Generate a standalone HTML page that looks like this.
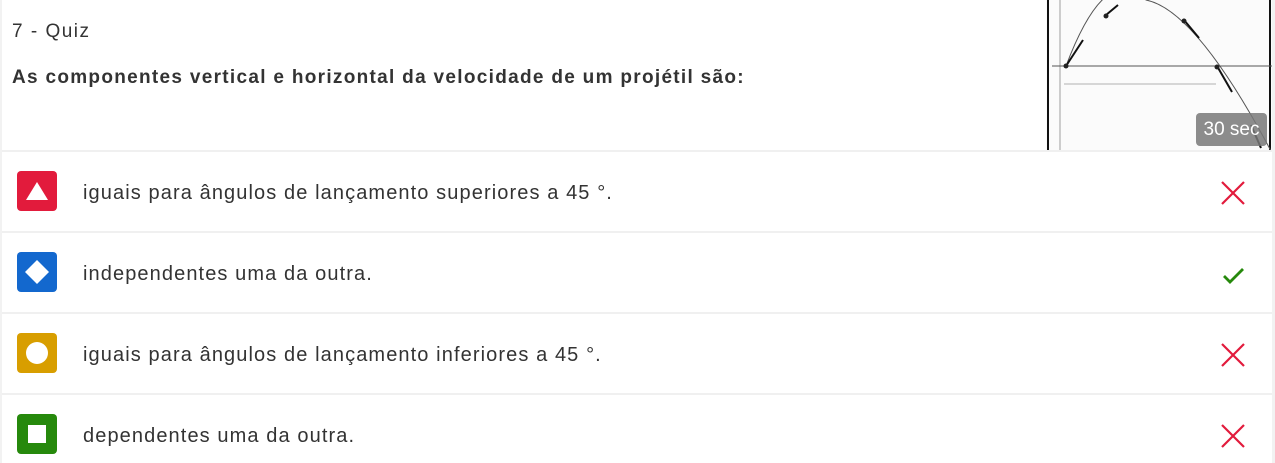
<!DOCTYPE html>
<html><head><meta charset="utf-8"><style>
*{margin:0;padding:0;box-sizing:border-box}
html,body{width:1275px;height:463px;overflow:hidden}
body{background:#f2f2f2;font-family:"Liberation Sans",sans-serif;color:#333;position:relative}
.card{position:absolute;left:2px;top:0;width:1270px;height:463px;background:#fff}
.title{position:absolute;left:12px;top:21px;font-size:19px;letter-spacing:1.5px;color:#333}
.q{position:absolute;left:12px;top:67px;font-size:19px;letter-spacing:1.3px;font-weight:bold;color:#333}
.img{position:absolute;left:1046px;top:0;width:226px;height:151px;background:#fbfbfb;overflow:hidden}
.badge{position:absolute;left:1196px;top:113px;width:71px;height:33px;background:rgba(120,120,120,.85);border-radius:4px;color:#fff;font-size:19px;line-height:33px;text-align:center}
.row{position:absolute;left:2px;width:1270px;height:81px;border-top:2px solid #f0f0f0}
.ic{position:absolute;left:15px;top:19px;width:40px;height:40px;border-radius:4px}
.t{position:absolute;left:81px;top:30px;font-size:20px;letter-spacing:1.1px;color:#333}
.m{position:absolute;left:1216px;top:26px}
</style></head><body>
<div class="card"></div>
<div class="title">7 - Quiz</div>
<div class="q">As componentes vertical e horizontal da velocidade de um projétil são:</div>
<div class="img"><svg width="226" height="151" viewBox="0 0 226 151">
<line x1="2" y1="0" x2="2" y2="151" stroke="#111" stroke-width="2"/>
<line x1="224" y1="0" x2="224" y2="151" stroke="#111" stroke-width="2"/>
<line x1="14" y1="0" x2="14" y2="151" stroke="#888" stroke-width="0.8"/>
<line x1="6" y1="66" x2="226" y2="66" stroke="#555" stroke-width="1"/>
<line x1="18" y1="84" x2="170" y2="84" stroke="#999" stroke-width="0.7"/>
<path d="M20 66 Q60 -40 100 0 Q150 10 225 151" fill="none" stroke="#555" stroke-width="1"/>
<line x1="20" y1="66" x2="37" y2="40" stroke="#111" stroke-width="2"/>
<line x1="60" y1="15" x2="72" y2="5" stroke="#111" stroke-width="2"/>
<line x1="138" y1="20" x2="153" y2="38" stroke="#111" stroke-width="2"/>
<line x1="171" y1="66" x2="186" y2="92" stroke="#111" stroke-width="2"/>
<line x1="205" y1="125" x2="215" y2="148" stroke="#111" stroke-width="2"/>
<circle cx="20" cy="66" r="2.5" fill="#222"/><circle cx="60" cy="16" r="2.5" fill="#222"/><circle cx="138" cy="21" r="2.5" fill="#222"/><circle cx="171" cy="67" r="2.5" fill="#222"/>
</svg></div>
<div class="badge">30 sec</div>

<div class="row" style="top:150px"><div class="ic" style="background:#e21b3c"><svg width="40" height="40"><polygon points="20,11 31,29 9,29" fill="#fff"/></svg></div><div class="t">iguais para ângulos de lançamento superiores a 45 °.</div><svg class="m" width="30" height="30"><path d="M4 4L26 26M26 4L4 26" stroke="#e21b3c" stroke-width="2.2"/></svg></div>
<div class="row" style="top:231px"><div class="ic" style="background:#1368ce"><svg width="40" height="40"><polygon points="20,8 32,20 20,32 8,20" fill="#fff"/></svg></div><div class="t">independentes uma da outra.</div><svg class="m" width="30" height="30"><path d="M6 17L12 23L25 10" fill="none" stroke="#26890c" stroke-width="2.8"/></svg></div>
<div class="row" style="top:312px"><div class="ic" style="background:#d89e00"><svg width="40" height="40"><circle cx="20" cy="20" r="11" fill="#fff"/></svg></div><div class="t">iguais para ângulos de lançamento inferiores a 45 °.</div><svg class="m" width="30" height="30"><path d="M4 4L26 26M26 4L4 26" stroke="#e21b3c" stroke-width="2.2"/></svg></div>
<div class="row" style="top:393px"><div class="ic" style="background:#26890c"><svg width="40" height="40"><rect x="11" y="11" width="18" height="18" fill="#fff"/></svg></div><div class="t">dependentes uma da outra.</div><svg class="m" width="30" height="30"><path d="M4 4L26 26M26 4L4 26" stroke="#e21b3c" stroke-width="2.2"/></svg></div>
</body></html>
